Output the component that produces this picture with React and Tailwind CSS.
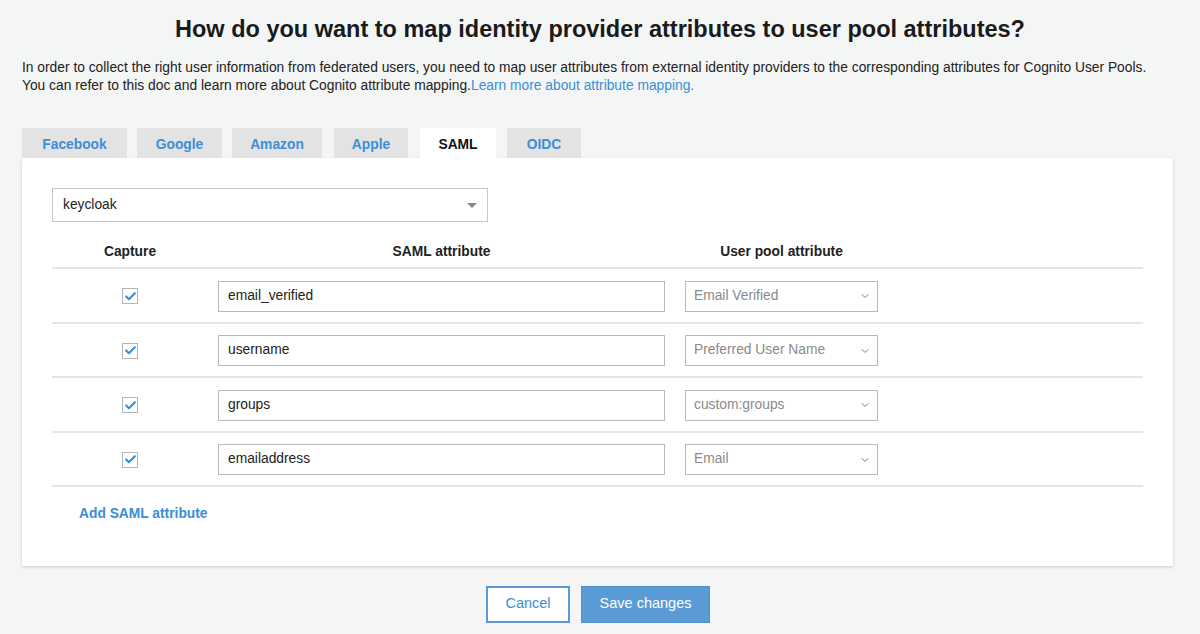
import { Check, ChevronDown } from "lucide-react";

const tabs = [
  { name: "Facebook", cls: "w-[105px]" },
  { name: "Google", cls: "w-[85px] ml-[10px]" },
  { name: "Amazon", cls: "w-[90px] ml-[10px]" },
  { name: "Apple", cls: "w-[74px] ml-[12px]" },
  { name: "SAML", cls: "w-[76px] ml-[12px]" },
  { name: "OIDC", cls: "w-[74px] ml-[11px]" },
];

const rows = [
  { saml: "email_verified", pool: "Email Verified" },
  { saml: "username", pool: "Preferred User Name" },
  { saml: "groups", pool: "custom:groups" },
  { saml: "emailaddress", pool: "Email" },
];

export default function App() {
  return (
    <div
      className="min-h-[634px] bg-[#f4f5f5] text-[#222] px-[22px] pt-[15px] pb-3"
      style={{ fontFamily: '"Liberation Sans", Arial, sans-serif' }}
    >
      <h1 className="text-center text-[23.5px] font-bold leading-[28px] text-[#1a1a1a]">
        How do you want to map identity provider attributes to user pool attributes?
      </h1>
      <p className="mt-[16px] text-[13.8px] leading-[18px] text-[#222]">
        In order to collect the right user information from federated users, you need to map user attributes from external identity providers to the corresponding attributes for Cognito User Pools.
        <br />
        You can refer to this doc and learn more about Cognito attribute mapping.
        <a className="text-[#3b8ed8]">Learn more about attribute mapping.</a>
      </p>

      <div className="mt-[33px] mr-[5px]">
        <div className="flex h-[30px]">
          {tabs.map((t) => (
            <div
              key={t.name}
              className={`flex items-center justify-center pt-[4px] text-[13.8px] font-bold ${t.cls} ${
                t.name === "SAML" ? "bg-white text-[#111]" : "bg-[#e3e3e3] text-[#3b8ed8]"
              }`}
            >
              {t.name}
            </div>
          ))}
        </div>

        <div className="bg-white shadow-[0_1px_3px_rgba(0,0,0,0.18)] px-[30px] pt-[30px] pb-[41px]">
          <div className="w-[436px] h-[34px] border border-[#c6c6c6] flex items-center justify-between px-[10px]">
            <span className="text-[13.8px]">keycloak</span>
            <span className="w-0 h-0 border-l-[5px] border-r-[5px] border-t-[5px] border-l-transparent border-r-transparent border-t-[#8a8a8a]" />
          </div>

          <div className="mt-[13px]">
            <div className="flex h-[34px] items-center pt-[2px] text-[13.8px] font-bold border-b-2 border-[#e5e5e5]">
              <div className="w-[156px] text-center">Capture</div>
              <div className="w-[467px] text-center">SAML attribute</div>
              <div className="w-[213px] text-center">User pool attribute</div>
            </div>
            {rows.map((r) => (
              <div key={r.saml} className="flex h-[54.5px] items-center pt-[2px] border-b-2 border-[#e5e5e5]">
                <div className="w-[156px] flex justify-center">
                  <span className="w-[16px] h-[16px] border border-[#b5b5b5] bg-white flex items-center justify-center">
                    <Check size={13} strokeWidth={4} className="text-[#3b8ed8]" />
                  </span>
                </div>
                <div className="w-[467px] px-[10px]">
                  <div className="h-[31px] border border-[#b9b9b9] flex items-center px-[9px] text-[13.8px]">
                    {r.saml}
                  </div>
                </div>
                <div className="w-[213px] px-[10px]">
                  <div className="h-[31px] border border-[#b9b9b9] flex items-center justify-between pl-[8px] pr-[6px] text-[13.8px] text-[#8a8a8a]">
                    <span>{r.pool}</span>
                    <ChevronDown size={12} strokeWidth={1.75} className="text-[#666]" />
                  </div>
                </div>
              </div>
            ))}
            <div className="pl-[27px] pt-[17px] text-[13.8px] font-bold text-[#3b8ed8]">
              Add SAML attribute
            </div>
          </div>
        </div>
      </div>

      <div className="flex justify-center gap-[11px] mt-[20px] mr-[4px]">
        <button className="w-[84px] h-[37px] border-2 border-[#5a9bd5] bg-white text-[#3b8ed8] text-[14.5px]">
          Cancel
        </button>
        <button className="w-[129px] h-[37px] bg-[#5a9bd5] border border-[#4f8fca] text-white text-[14.5px]">
          Save changes
        </button>
      </div>
    </div>
  );
}
